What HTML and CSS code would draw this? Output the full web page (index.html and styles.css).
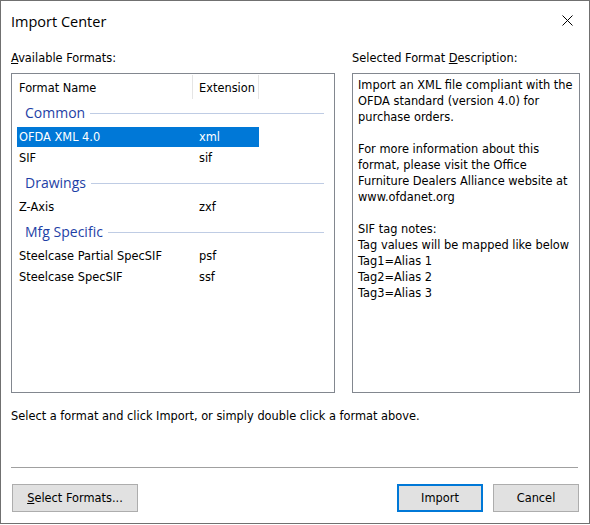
FILE: index.html
```html
<!DOCTYPE html>
<html>
<head>
<meta charset="utf-8">
<title>Import Center</title>
<link rel="stylesheet" href="styles.css">
</head>
<body>
<div class="window">
  <div class="titlebar">
    <span class="title">Import Center</span>
    <svg class="close" width="11" height="11" viewBox="0 0 11 11">
      <path d="M0.5 0.5 L10.5 10.5 M10.5 0.5 L0.5 10.5" stroke="#000" stroke-width="1" fill="none"/>
    </svg>
  </div>

  <div class="panes">
    <div class="label"><u>A</u>vailable Formats:</div>
    <div class="label">Selected Format <u>D</u>escription:</div>

    <div class="listbox">
      <div class="lv-header">
        <div class="hcell hname">Format Name</div>
        <div class="hcell hext">Extension</div>
      </div>
      <div class="lv-body">
        <div class="group first"><span class="gname">Common</span><span class="gline"></span></div>
        <div class="row selected"><span class="cname">OFDA XML 4.0</span><span class="cext">xml</span></div>
        <div class="row"><span class="cname">SIF</span><span class="cext">sif</span></div>
        <div class="group"><span class="gname">Drawings</span><span class="gline"></span></div>
        <div class="row"><span class="cname">Z-Axis</span><span class="cext">zxf</span></div>
        <div class="group"><span class="gname">Mfg Specific</span><span class="gline"></span></div>
        <div class="row"><span class="cname">Steelcase Partial SpecSIF</span><span class="cext">psf</span></div>
        <div class="row"><span class="cname">Steelcase SpecSIF</span><span class="cext">ssf</span></div>
      </div>
    </div>

    <div class="descbox">
      <p>Import an XML file compliant with the OFDA standard (version 4.0) for purchase orders.</p>
      <p>For more information about this format, please visit the Office Furniture Dealers Alliance website at www.ofdanet.org</p>
      <p>SIF tag notes:<br>Tag values will be mapped like below<br>Tag1=Alias 1<br>Tag2=Alias 2<br>Tag3=Alias 3</p>
    </div>
  </div>

  <div class="status">Select a format and click Import, or simply double click a format above.</div>

  <div class="separator"></div>

  <div class="footer">
    <button class="btn btn-select"><u>S</u>elect Formats...</button>
    <div class="spacer"></div>
    <button class="btn btn-import">Import</button>
    <button class="btn btn-cancel">Cancel</button>
  </div>
</div>
</body>
</html>
```

FILE: styles.css
```css
html, body {
  margin: 0;
  padding: 0;
  background: #ffffff;
}

.window {
  box-sizing: border-box;
  width: 590px;
  height: 524px;
  border: 1px solid #707070;
  background: #ffffff;
  display: flex;
  flex-direction: column;
  padding: 0 9px 0 10px;
  font-family: "DejaVu Sans", sans-serif;
  font-size: 11.4px;
  color: #000;
}

.titlebar {
  height: 40px;
  display: flex;
  align-items: center;
}

.title {
  font-family: "Open Sans", sans-serif;
  font-size: 14.5px;
  line-height: 20px;
  padding-top: 1px;
  color: #000;
}

.close {
  margin-left: auto;
  margin-right: 7px;
  margin-top: -1px;
  display: block;
}

.panes {
  margin-top: 9px;
  display: grid;
  grid-template-columns: 324px 228px;
  column-gap: 17px;
  grid-template-rows: 16px 320px;
  row-gap: 7px;
}

.label {
  line-height: 16px;
  white-space: nowrap;
}

.listbox,
.descbox {
  box-sizing: border-box;
  border: 1px solid #82878f;
  background: #fff;
}

.lv-header {
  display: flex;
  height: 25px;
}

.hcell {
  box-sizing: border-box;
  height: 24px;
  margin-top: 1px;
  padding-top: 2px;
  line-height: 22px;
  border-right: 1px solid #e5e5e5;
  white-space: nowrap;
}

.hname {
  width: 181px;
  padding-left: 7px;
}

.hext {
  width: 66px;
  padding-left: 6px;
}

.lv-body {
  padding-top: 2px;
}

.group {
  display: flex;
  align-items: center;
  height: 24px;
  margin: 3px 10px 2px 13px;
}

.group.first {
  margin-top: 0;
}

.gname {
  font-family: "Open Sans", sans-serif;
  font-size: 14px;
  line-height: 24px;
  color: #1e3fa6;
  white-space: nowrap;
}

.gline {
  flex: 1;
  height: 1px;
  margin-left: 5px;
  background: #bfcce4;
}

.row {
  display: flex;
  width: 242px;
  height: 20px;
  line-height: 20px;
  margin: 0 0 1px 5px;
  white-space: nowrap;
}

.row.selected {
  background: #0078d7;
  color: #fff;
}

.cname {
  box-sizing: border-box;
  width: 180px;
  padding-left: 2px;
}

.cext {
  padding-left: 2px;
}

.descbox {
  padding: 3px 5px 0 5px;
  line-height: 16px;
}

.descbox p {
  margin: 0 0 16px 0;
}

.status {
  margin-top: 15px;
  line-height: 16px;
  white-space: nowrap;
}

.separator {
  margin-top: 43px;
  margin-right: 2px;
  height: 1px;
  background: #a0a0a0;
}

.footer {
  margin-top: 16px;
  display: flex;
  gap: 10px;
}

.spacer {
  flex: 1;
}

.btn {
  box-sizing: border-box;
  height: 28px;
  padding: 0;
  border: 1px solid #adadad;
  background: #e1e1e1;
  font-family: "DejaVu Sans", sans-serif;
  font-size: 11.4px;
  color: #000;
  text-align: center;
}

.btn-select {
  width: 126px;
  margin-left: 1px;
}

.btn-import {
  width: 86px;
  border: 2px solid #0078d7;
}

.btn-cancel {
  width: 86px;
  margin-right: 1px;
}
```
